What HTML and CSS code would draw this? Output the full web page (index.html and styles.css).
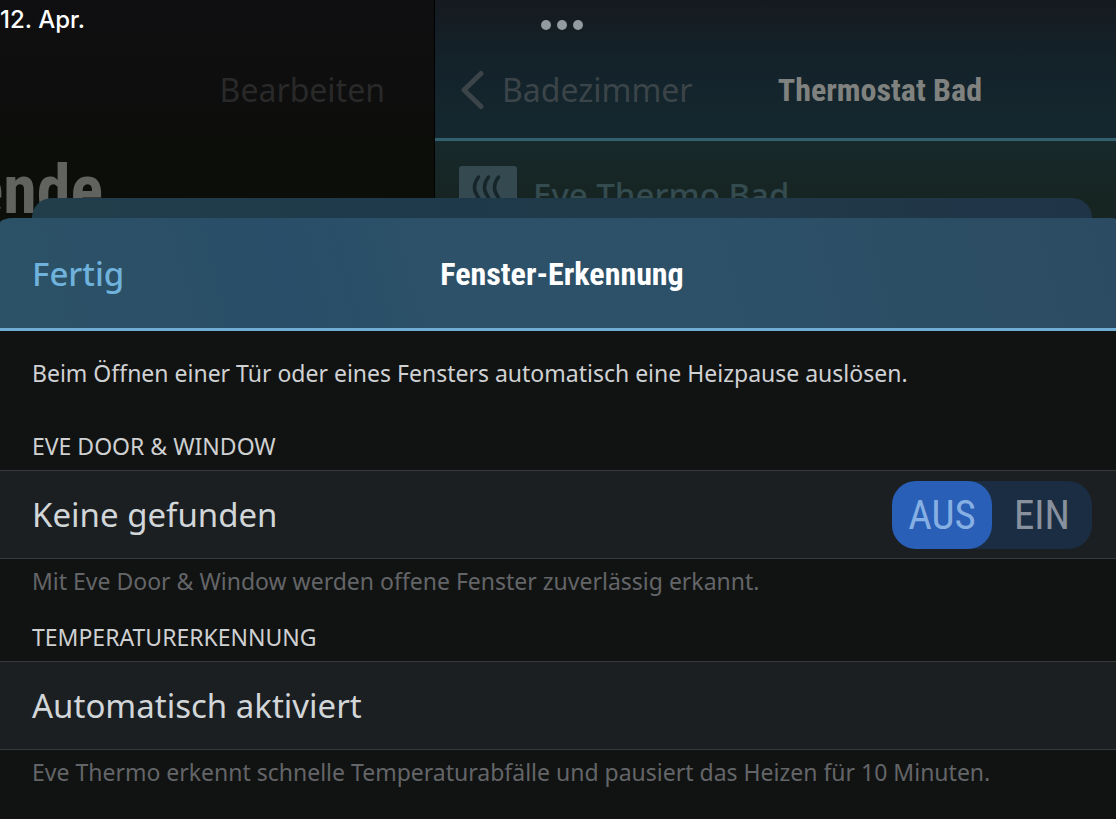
FILE: index.html
```html
<!DOCTYPE html>
<html lang="de">
<head>
<meta charset="utf-8">
<meta name="viewport" content="width=device-width, initial-scale=1">
<title>Fenster-Erkennung</title>
<link rel="stylesheet" href="styles.css">
</head>
<body>
<div class="backdrop">
  <aside class="sidebar">
    <p class="date">12. Apr.</p>
    <button class="edit" type="button">Bearbeiten</button>
    <p class="scene">ende</p>
  </aside>
  <section class="detail">
    <header class="detail-header">
      <button class="dots" type="button" aria-label="Multitasking"><span></span><span></span><span></span></button>
      <nav class="detail-nav">
        <a class="back" href="#">
          <svg width="26" height="40" viewBox="0 0 26 40" aria-hidden="true"><path d="M22 3.500 5 20l17 16.500" fill="none" stroke="currentColor" stroke-width="5" stroke-linecap="round" stroke-linejoin="round"/></svg>
          <span>Badezimmer</span>
        </a>
        <h2 class="detail-title">Thermostat Bad</h2>
      </nav>
    </header>
    <div class="device">
      <svg width="58" height="58" viewBox="0 0 58 58" aria-hidden="true"><rect width="58" height="58" rx="3" fill="#344a50"/><g fill="none" stroke="#16262a" stroke-width="3.500" stroke-linecap="round"><path d="M19.500 11C14 18 14 24 19 31s5 12 0 18"/><path d="M29.500 11C24 18 24 24 29 31s5 12 0 18"/><path d="M39.500 11C34 18 34 24 39 31s5 12 0 18"/></g></svg>
      <span>Eve Thermo Bad</span>
    </div>
  </section>
  <div class="stacked"></div>
</div>
<main class="sheet">
  <header class="sheet-header">
    <button class="done" type="button">Fertig</button>
    <h1 class="sheet-title">Fenster-Erkennung</h1>
  </header>
  <p class="intro">Beim Öffnen einer Tür oder eines Fensters automatisch eine Heizpause auslösen.</p>
  <section class="group">
    <h2 class="label">EVE DOOR &amp; WINDOW</h2>
    <div class="row">
      <span>Keine gefunden</span>
      <div class="switch" role="radiogroup" aria-label="Fenster-Erkennung">
        <input type="radio" name="detect" id="off" checked><label for="off">AUS</label>
        <input type="radio" name="detect" id="on"><label for="on">EIN</label>
      </div>
    </div>
    <p class="note">Mit Eve Door &amp; Window werden offene Fenster zuverlässig erkannt.</p>
  </section>
  <section class="group">
    <h2 class="label">TEMPERATURERKENNUNG</h2>
    <div class="row"><span>Automatisch aktiviert</span></div>
    <p class="note">Eve Thermo erkennt schnelle Temperaturabfälle und pausiert das Heizen für 10 Minuten.</p>
  </section>
</main>
</body>
</html>
```
FILE: styles.css
```css
* { box-sizing: border-box; }
body {
  margin: 0;
  min-height: 100vh;
  display: flex;
  flex-direction: column;
  background: #0c0e09;
  font-family: "Noto Sans", sans-serif;
  font-size: 23px;
  font-weight: 400;
  line-height: 32px;
}
h1, h2, p { margin: 0; font-weight: 400; }
button { padding: 0; border: 0; background: none; font: inherit; cursor: pointer; }

.backdrop { position: relative; display: flex; height: 218px; overflow: hidden; }
.sidebar {
  flex: 0 0 435px;
  display: flex;
  flex-direction: column;
  overflow: hidden;
  border-right: 1px solid #000;
  background: linear-gradient(#0f0f11, #0e0e0e 100px, #0c0e09 150px);
}
.date {
  padding-top: 4px;
  color: #fff;
  font-family: Inter, sans-serif;
  font-size: 24px;
  font-weight: 500;
}
.edit {
  align-self: flex-end;
  margin: 34px 49px 0 0;
  color: #292929;
  font-size: 32px;
  line-height: 40px;
}
.scene {
  display: flex;
  justify-content: flex-end;
  width: 103px;
  margin-top: 40px;
  color: #60635e;
  font-family: "Roboto Condensed", "Liberation Sans Narrow", sans-serif;
  font-size: 68px;
  font-weight: 700;
  line-height: 80px;
}
.detail { flex: 1; min-width: 0; background: linear-gradient(#18292c 140px, #162522 198px); }
.detail-header {
  height: 141px;
  border-bottom: 3px solid #33606e;
  background: linear-gradient(#151a20, #14222a 60px, #15282f);
}
.dots { display: flex; gap: 6px; padding: 20px 0 10px 106px; }
.dots span { width: 10px; height: 10px; border-radius: 50%; background: #929b9f; }
.detail-nav { display: flex; align-items: center; justify-content: space-between; padding: 30px 134px 0 24px; }
.back {
  display: flex;
  align-items: center;
  gap: 17px;
  color: #3b4448;
  font-size: 32px;
  line-height: 40px;
  text-decoration: none;
}
.detail-title, .sheet-title {
  font-family: "Roboto Condensed", "Liberation Sans Narrow", sans-serif;
  font-size: 32px;
  font-weight: 700;
  line-height: 40px;
  white-space: nowrap;
}
.detail-title { color: #80827f; }
.device {
  display: flex;
  align-items: center;
  gap: 16px;
  padding: 25px 24px 0;
  color: #344b50;
  font-size: 33px;
  font-weight: 500;
}
.stacked {
  position: absolute;
  inset: auto 24px 0 32px;
  height: 20px;
  border-radius: 20px 20px 0 0;
  background: linear-gradient(90deg, #223e4b, #1e394a 40%, #213a49 60%, #1f3447);
}

.sheet {
  flex: 1;
  border-radius: 14px 5px 0 0 / 5px 1px 0 0;
  overflow: hidden;
  background: #111312;
}
.sheet-header {
  display: grid;
  grid-template-columns: 1fr auto 1fr;
  align-items: center;
  height: 113px;
  padding: 2px 24px 0 32px;
  border-bottom: 3px solid #70add5;
  background: linear-gradient(75deg, #2c5267, #2b5067 15%, #284e69 26%, #2c5168 40%, #2c5067 70%, #2b4b62);
}
.done { justify-self: start; color: #6fb2dc; font-size: 33px; font-weight: 500; line-height: 40px; }
.sheet-title { color: #fff; }
.intro { padding: 26px 32px 17px; color: #d0d1d2; }
.group { padding-top: 24px; }
.label { padding: 0 32px 8px; color: #cfd0d1; font-size: 23px; }
.row {
  display: flex;
  align-items: center;
  justify-content: space-between;
  min-height: 89px;
  padding: 0 24px 0 32px;
  border: solid #38393c;
  border-width: 1px 0;
  background: #1b1f22;
  color: #d2d6d9;
  font-size: 33px;
  line-height: 40px;
}
.note { padding: 6px 32px 0; color: #646568; }
.switch {
  display: flex;
  position: relative;
  border-radius: 24px;
  background: #1b2d43;
}
.switch input { position: absolute; opacity: 0; }
.switch label {
  width: 100px;
  border-radius: 24px;
  color: #88919d;
  font-family: "Roboto Condensed", "Liberation Sans Narrow", sans-serif;
  font-size: 41px;
  line-height: 68px;
  text-align: center;
}
.switch input:checked + label { background: #295fb6; color: #86b0e3; }
```
